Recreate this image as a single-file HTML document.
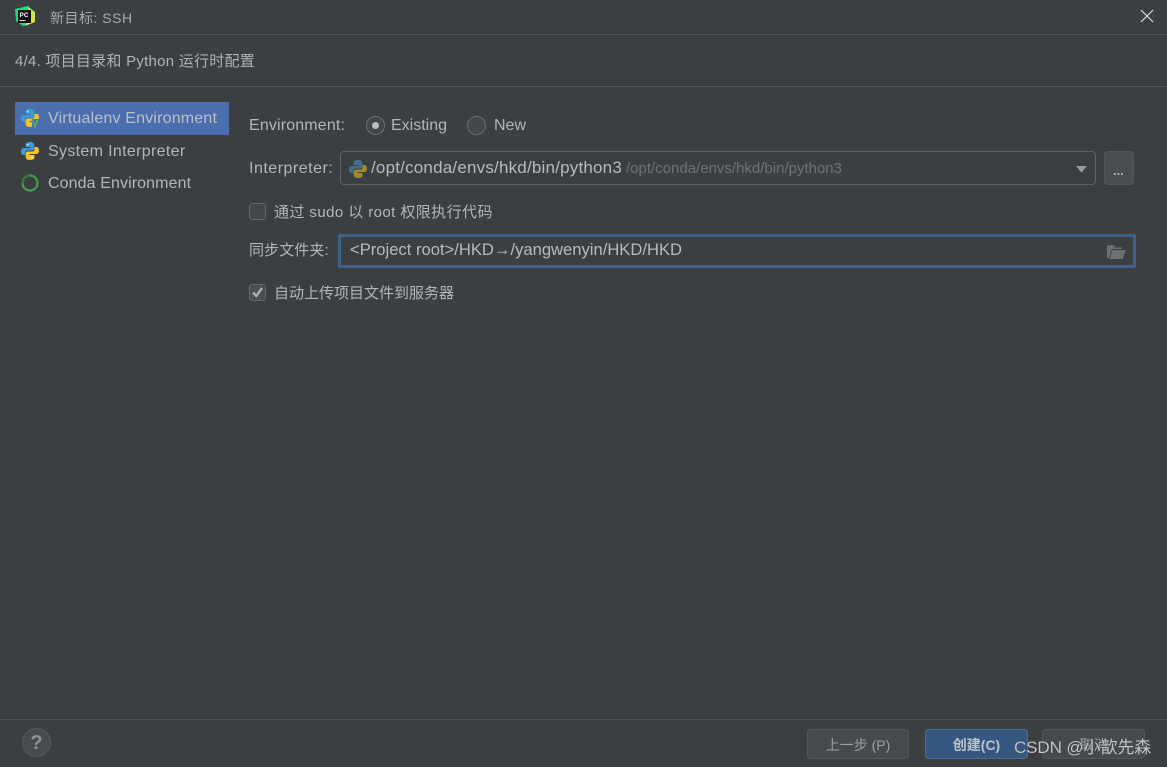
<!DOCTYPE html>
<html><head><meta charset="utf-8">
<style>
html,body{margin:0;padding:0;background:#3c3f41;}
#r{position:relative;width:1167px;height:767px;overflow:hidden;background:#3c3f41;color:#b4b6b8;font-family:"Liberation Sans","Noto Sans CJK SC",sans-serif;font-size:16px;}
.t{position:absolute;white-space:nowrap;line-height:20px;height:20px;}
.b{position:absolute;box-sizing:border-box;}
.line{position:absolute;left:0;width:1167px;height:1px;background:#515354;}
svg{position:absolute;overflow:visible;}
.btn{position:absolute;box-sizing:border-box;top:729px;height:30px;border:1px solid #55585a;border-radius:4px;background:#474a4c;text-align:center;line-height:30px;font-size:14px;color:#a0a3a5;}
</style></head><body><div id="r">

<svg style="left:15px;top:6px" width="21" height="21" viewBox="0 0 21 21">
<path d="M0 3L13 0L20 6L20 16L8 20L1 15Z" fill="#21d789"/>
<path d="M12 1L20 6L20 16L10 20L15 9Z" fill="#d8e04a"/>
<rect x="3" y="4" width="13" height="13" fill="#111"/>
<rect x="4.500" y="14" width="6" height="1" fill="#ddd"/>
<text x="4.500" y="11" font-size="6.500" font-weight="bold" fill="#fff" font-family="Liberation Sans">PC</text>
</svg>
<div class="t" style="left:50px;top:8px;font-size:14px;color:#a9abad;letter-spacing:.5px">新目标: SSH</div>
<svg style="left:1141px;top:10px" width="12" height="12"><path d="M0 0L12 12M12 0L0 12" stroke="#e8e8e8" stroke-width="1.100"/></svg>
<div class="line" style="top:34px"></div>

<div class="t" style="left:15px;top:52px;font-size:15px;color:#b0b2b4;letter-spacing:.25px">4/4. 项目目录和 Python 运行时配置</div>
<div class="line" style="top:86px"></div>

<div class="b" style="left:15px;top:102px;width:214px;height:33px;background:#4b6eaf"></div>

<svg style="left:21px;top:109px" width="18" height="18" viewBox="0 0 18 18">
<path d="M9 0C5 0 4.500 1.500 4.500 3V5H9.500V6H2.500C1 6 0 7.500 0 9.500S1 13 2.500 13H4.500V10.500C4.500 9 5.500 8.500 7 8.500H11C12.500 8.500 13.300 7.500 13.300 6V3C13.300 1 11.500 0 9 0Z" fill="#3c9ad6"/>
<path d="M9 18C13 18 13.500 16.500 13.500 15V13H8.500V12H15.500C17 12 18 10.500 18 8.500S17 5 15.500 5H13.500V7.500C13.500 9 12.500 9.500 11 9.500H7C5.500 9.500 4.700 10.500 4.700 12V15C4.700 17 6.500 18 9 18Z" fill="#f5c528"/>
<circle cx="6.800" cy="2.700" r=".9" fill="#cfe8f7"/>
<rect x="11" y="10" width="8" height="9" fill="#4b6eaf"/>
<path d="M11.500 11L14 17.500L16.500 11" fill="none" stroke="#62b543" stroke-width="1.400"/>
</svg>
<div class="t" style="left:48px;top:109px;color:#bbc0c8;letter-spacing:.18px">Virtualenv Environment</div>

<svg style="left:21px;top:142px" width="18" height="18" viewBox="0 0 18 18">
<path d="M9 0C5 0 4.500 1.500 4.500 3V5H9.500V6H2.500C1 6 0 7.500 0 9.500S1 13 2.500 13H4.500V10.500C4.500 9 5.500 8.500 7 8.500H11C12.500 8.500 13.300 7.500 13.300 6V3C13.300 1 11.500 0 9 0Z" fill="#3c9ad6"/>
<path d="M9 18C13 18 13.500 16.500 13.500 15V13H8.500V12H15.500C17 12 18 10.500 18 8.500S17 5 15.500 5H13.500V7.500C13.500 9 12.500 9.500 11 9.500H7C5.500 9.500 4.700 10.500 4.700 12V15C4.700 17 6.500 18 9 18Z" fill="#f5c528"/>
<circle cx="6.800" cy="2.700" r=".9" fill="#cfe8f7"/><circle cx="11.200" cy="15.300" r=".9" fill="#fff5cf"/>
</svg>
<div class="t" style="left:48px;top:142px;letter-spacing:.33px">System Interpreter</div>

<svg style="left:21px;top:174px" width="18" height="18" viewBox="0 0 18 18">
<circle cx="9" cy="9" r="7.500" fill="none" stroke="#43a047" stroke-width="2.200"/>
<path d="M1.500 9A7.500 7.500 0 0 1 9 1.500" fill="none" stroke="#3c3f41" stroke-width="2.200" stroke-dasharray="1 1.200"/>
</svg>
<div class="t" style="left:48px;top:174px;letter-spacing:.1px">Conda Environment</div>

<div class="t" style="left:249px;top:116px;letter-spacing:.15px">Environment:</div>
<div class="b" style="left:366px;top:116px;width:19px;height:19px;border-radius:50%;border:1px solid #6b6e70;background:#43474a"></div>
<div class="b" style="left:372px;top:122px;width:7px;height:7px;border-radius:50%;background:#bbbbbb"></div>
<div class="t" style="left:391px;top:116px">Existing</div>
<div class="b" style="left:467px;top:116px;width:19px;height:19px;border-radius:50%;border:1px solid #6b6e70;background:#43474a"></div>
<div class="t" style="left:494px;top:116px">New</div>

<div class="t" style="left:249px;top:159px;letter-spacing:.5px">Interpreter:</div>
<div class="b" style="left:340px;top:151px;width:756px;height:34px;border:1px solid #616365;border-radius:4px;background:#3c3f41"></div>
<svg style="left:349px;top:160px" width="18" height="18" viewBox="0 0 18 18">
<path d="M9 0C5 0 4.500 1.500 4.500 3V5H9.500V6H2.500C1 6 0 7.500 0 9.500S1 13 2.500 13H4.500V10.500C4.500 9 5.500 8.500 7 8.500H11C12.500 8.500 13.300 7.500 13.300 6V3C13.300 1 11.500 0 9 0Z" fill="#41708f"/>
<path d="M9 18C13 18 13.500 16.500 13.500 15V13H8.500V12H15.500C17 12 18 10.500 18 8.500S17 5 15.500 5H13.500V7.500C13.500 9 12.500 9.500 11 9.500H7C5.500 9.500 4.700 10.500 4.700 12V15C4.700 17 6.500 18 9 18Z" fill="#a18a2f"/>
</svg>
<div class="t" style="left:371px;top:158px;font-size:17px;color:#b8babc;letter-spacing:.2px">/opt/conda/envs/hkd/bin/python3</div>
<div class="t" style="left:626px;top:159px;font-size:15px;color:#6f7274">/opt/conda/envs/hkd/bin/python3</div>
<svg style="left:1076px;top:166px" width="11" height="7"><path d="M0 0H11L5.500 6.500Z" fill="#9a9d9f"/></svg>
<div class="b" style="left:1104px;top:151px;width:30px;height:34px;border:1px solid #55585a;border-radius:4px;background:#4a4d4f"></div>
<div class="t" style="left:1113px;top:161px;font-size:13px;font-weight:bold;color:#a5b4bf">...</div>

<div class="b" style="left:249px;top:203px;width:17px;height:17px;border:1px solid #65686a;border-radius:3px;background:#43474a"></div>
<div class="t" style="left:274px;top:203px;font-size:15px;letter-spacing:.42px">通过 sudo 以 root 权限执行代码</div>

<div class="t" style="left:249px;top:241px;font-size:15px;letter-spacing:.1px">同步文件夹:</div>
<div class="b" style="left:338px;top:234px;width:798px;height:34px;border:3px solid #3e6287;border-radius:2px;background:#3c3f41"></div>
<div class="t" style="left:350px;top:240px;font-size:16.600px;color:#b8babc">&lt;Project root&gt;/HKD→/yangwenyin/HKD/HKD</div>
<svg style="left:1107px;top:244px" width="19" height="15" viewBox="0 0 19 15">
<path d="M0 1.500V14H2L5 5H15V3.500H8L6.500 1Z" fill="#697173"/>
<path d="M5.500 6H19L15.500 15H2.500Z" fill="#697173"/>
</svg>

<div class="b" style="left:249px;top:284px;width:17px;height:17px;border:1px solid #65686a;border-radius:3px;background:#4a4e50"></div>
<svg style="left:252px;top:287px" width="11" height="11"><path d="M1 5.500L4.300 9L10 1" fill="none" stroke="#aeb1b3" stroke-width="2.400"/></svg>
<div class="t" style="left:274px;top:284px;font-size:15px">自动上传项目文件到服务器</div>

<div class="line" style="top:719px"></div>

<div class="b" style="left:22px;top:728px;width:29px;height:29px;border-radius:50%;background:#484b4d;border:1px solid #55585a"></div>
<div class="t" style="left:22px;top:733px;width:29px;text-align:center;font-size:20px;font-weight:bold;color:#909395">?</div>

<div class="btn" style="left:807px;width:102px">上一步 (P)</div>
<div class="btn" style="left:925px;width:103px;background:#365880;border-color:#4c708c;color:#bcc4cc;font-weight:bold">创建(C)</div>
<div class="btn" style="left:1042px;width:103px">取消</div>

<div class="t" style="left:1014px;top:738px;font-size:17px;letter-spacing:-.1px;color:#c4c6c8;text-shadow:0 0 1px #333">CSDN @小歆先森</div>
</div></body></html>
